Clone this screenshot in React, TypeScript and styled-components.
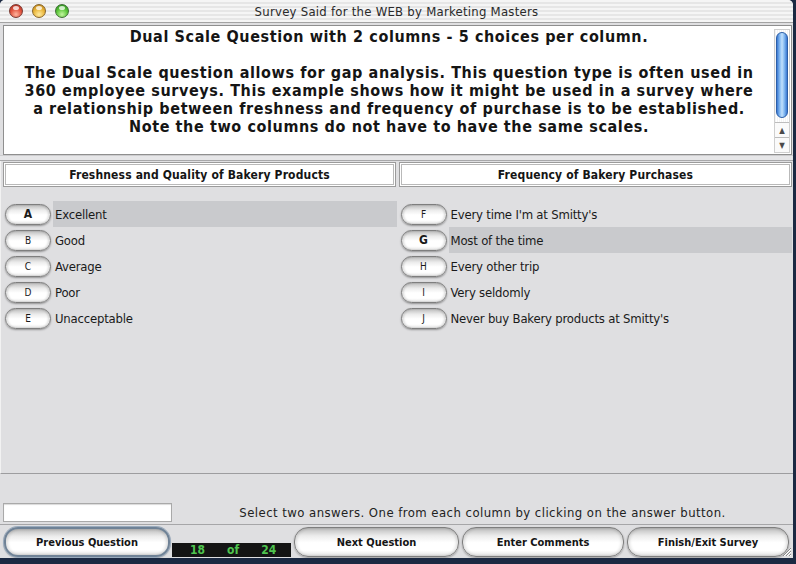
import React from 'react';
import styled, { createGlobalStyle, css } from 'styled-components';

const FONT = `"DejaVu Sans Condensed", "DejaVu Sans", sans-serif`;

const GlobalStyle = createGlobalStyle`
  html, body { margin: 0; padding: 0; }
  body { background: #1b2942; font-family: ${FONT}; }
  * { box-sizing: border-box; }
`;

const Window = styled.div`
  width: 793px;
  height: 558px;
  display: flex;
  flex-direction: column;
  background: #dfdfe1;
  border-radius: 5px 5px 0 0;
  overflow: hidden;
  position: relative;
`;

const TitleBar = styled.div`
  height: 23px;
  flex: none;
  display: grid;
  grid-template-columns: 1fr auto 1fr;
  align-items: center;
  background: repeating-linear-gradient(to bottom, #f5f5f5 0, #f5f5f5 2px, #e6e6e6 2px, #e6e6e6 4px);
  border-bottom: 1px solid #a3a3a3;
`;

const Lights = styled.div`
  display: flex;
  gap: 9px;
  padding-left: 9px;
  padding-bottom: 1px;
`;

const lightColors = {
  red: ['#ffb59e', '#e2543f', '#a8281b', '#7a3a32'],
  yellow: ['#ffeaa0', '#eab73c', '#b57a12', '#86642a'],
  green: ['#c4f5a0', '#5cc63a', '#23851a', '#3f6e34'],
};

const Light = styled.div<{ $c: 'red' | 'yellow' | 'green' }>`
  width: 14px;
  height: 14px;
  border-radius: 50%;
  position: relative;
  ${({ $c }) => css`
    background: radial-gradient(circle at 50% 78%, ${lightColors[$c][0]} 0%, ${lightColors[$c][1]} 50%, ${lightColors[$c][2]} 100%);
    border: 1px solid ${lightColors[$c][3]};
  `}
  &::after {
    content: '';
    position: absolute;
    left: 3px;
    top: 1px;
    width: 6px;
    height: 4px;
    border-radius: 50%;
    background: rgba(255, 255, 255, 0.75);
  }
`;

const Title = styled.div`
  font-size: 13px;
  letter-spacing: 0.25px;
  color: #2a2a2a;
  white-space: nowrap;
`;

const QuestionBox = styled.div`
  margin: 2px 1px 0 3px;
  height: 130px;
  flex: none;
  border: 1px solid #8f8f8f;
  background: #fff;
  display: flex;
`;

const QuestionText = styled.div`
  flex: 1;
  padding-top: 2px;
  text-align: center;
  font-weight: bold;
  font-size: 16px;
  letter-spacing: 0.6px;
  line-height: 18px;
  color: #151515;
  white-space: nowrap;
`;

const Line = styled.div`
  height: 18px;
`;

const ScrollTrack = styled.div`
  width: 16px;
  margin: 3px 1px 1px 0;
  display: flex;
  flex-direction: column;
  border: 1px solid #cfcfcf;
  background: repeating-linear-gradient(to right, #f4f4f4 0, #f4f4f4 1px, #ffffff 1px, #ffffff 2px);
`;

const Thumb = styled.div`
  margin: 2px 1px 0;
  height: 86px;
  border-radius: 7px;
  border: 1px solid #2c5fa8;
  background: linear-gradient(to right, #3a78d2 0%, #86bbf2 28%, #c2e0fc 50%, #86bbf2 72%, #3a78d2 100%);
`;

const TrackSpace = styled.div`
  flex: 1;
`;

const Arrow = styled.div`
  height: 15px;
  border-top: 1px solid #bdbdbd;
  display: flex;
  align-items: center;
  justify-content: center;
  font-size: 8px;
  color: #4a4a4a;
  background: #fafafa;
`;

const Divider = styled.div`
  height: 6px;
  flex: none;
  border-top: 1px solid #cdcdcf;
  border-bottom: 1px solid #a7a7a9;
  background: #e6e6e8;
`;

const ChoicesPanel = styled.div`
  flex: 1;
  display: flex;
  flex-direction: column;
  border-bottom: 1px solid #9d9d9f;
  border-left: 1px solid #f2f2f2;
`;

const HeaderRow = styled.div`
  display: grid;
  grid-template-columns: 1fr 1fr;
  gap: 3px;
  padding: 1px 1px 0 2px;
`;

const HeaderBox = styled.div`
  height: 25px;
  background: #fff;
  border: 1px solid #9b9b9b;
  box-shadow: inset 0 0 0 1px #fff, inset 0 0 0 2px #b9b9b9;
  display: flex;
  align-items: center;
  justify-content: center;
  font-weight: bold;
  font-size: 12px;
  letter-spacing: 0.15px;
  color: #151515;
`;

const Columns = styled.div`
  display: grid;
  grid-template-columns: 1fr 1fr;
  gap: 4px;
  padding: 14px 1px 0 4px;
`;

const Column = styled.div`
  display: flex;
  flex-direction: column;
`;

const Row = styled.div`
  height: 26px;
  display: flex;
  align-items: center;
`;

const aquaFace = css`
  background: linear-gradient(to bottom, #bdbdbd 0%, #ececec 28%, #ffffff 52%, #ffffff 80%, #e6e6e6 100%);
`;

const ChoiceButton = styled.div<{ $selected?: boolean }>`
  width: 46px;
  height: 21px;
  flex: none;
  margin-right: 2px;
  border-radius: 11px;
  border: 1px solid #7e7e7e;
  ${aquaFace}
  box-shadow: 0 1px 2px rgba(0, 0, 0, 0.35), inset 2px 0 2px rgba(0, 0, 0, 0.12), inset -2px 0 2px rgba(0, 0, 0, 0.12);
  display: flex;
  align-items: center;
  justify-content: center;
  color: #1a1a1a;
  font-size: ${({ $selected }) => ($selected ? '12px' : '10px')};
  font-weight: ${({ $selected }) => ($selected ? 'bold' : 'normal')};
`;

const ChoiceLabel = styled.div<{ $selected?: boolean }>`
  flex: 1;
  height: 26px;
  display: flex;
  align-items: center;
  padding-left: 2px;
  font-size: 13px;
  letter-spacing: -0.2px;
  color: #1a1a1a;
  white-space: nowrap;
  background: ${({ $selected }) => ($selected ? '#c9cacd' : 'transparent')};
`;

const StatusArea = styled.div`
  height: 50px;
  flex: none;
  display: flex;
  align-items: flex-end;
  padding: 0 0 2px 3px;
`;

const Input = styled.div`
  width: 169px;
  height: 19px;
  background: #fff;
  border: 1px solid #a9a9a9;
  box-shadow: inset 0 1px 1px rgba(0, 0, 0, 0.15);
`;

const StatusText = styled.div`
  flex: 1;
  text-align: center;
  font-size: 13px;
  letter-spacing: 0.45px;
  line-height: 19px;
  color: #222;
  white-space: nowrap;
`;

const ButtonBar = styled.div`
  height: 34px;
  flex: none;
  border-top: 1px solid #a6a6a8;
  display: flex;
  align-items: flex-start;
  gap: 3px;
  padding: 2px 0 0 4px;
`;

const PushButton = styled.div<{ $w: number; $focused?: boolean }>`
  width: ${({ $w }) => $w}px;
  height: 30px;
  flex: none;
  border-radius: 14px;
  border: ${({ $focused }) => ($focused ? '2px solid #6f8296' : '1px solid #7e7e7e')};
  ${aquaFace}
  box-shadow: ${({ $focused }) =>
    $focused
      ? '0 0 0 1px #9aabbd, 0 1px 2px rgba(0,0,0,0.3), inset 2px 0 3px rgba(0,0,0,0.12), inset -2px 0 3px rgba(0,0,0,0.12)'
      : '0 1px 2px rgba(0, 0, 0, 0.3), inset 2px 0 3px rgba(0,0,0,0.12), inset -2px 0 3px rgba(0,0,0,0.12)'};
  display: flex;
  align-items: center;
  justify-content: center;
  font-weight: bold;
  font-size: 11px;
  color: #151515;
  white-space: nowrap;
`;

const Counter = styled.div`
  width: 119px;
  height: 14px;
  margin-top: 16px;
  margin-left: -1px;
  flex: none;
  background: #141414;
  display: flex;
  align-items: center;
  gap: 22px;
  padding-left: 18px;
  color: #4fc44f;
  font-weight: bold;
  font-size: 12px;
  line-height: 14px;
`;

const Grip = styled.svg`
  position: absolute;
  right: 1px;
  bottom: 1px;
  width: 12px;
  height: 12px;
`;

const left = [
  { key: 'A', text: 'Excellent', selected: true },
  { key: 'B', text: 'Good' },
  { key: 'C', text: 'Average' },
  { key: 'D', text: 'Poor' },
  { key: 'E', text: 'Unacceptable' },
];

const right = [
  { key: 'F', text: "Every time I'm at Smitty's" },
  { key: 'G', text: 'Most of the time', selected: true },
  { key: 'H', text: 'Every other trip' },
  { key: 'I', text: 'Very seldomly' },
  { key: 'J', text: "Never buy Bakery products at Smitty's" },
];

type Choice = { key: string; text: string; selected?: boolean };

const ChoiceColumn = ({ items }: { items: Choice[] }) => (
  <Column>
    {items.map((c) => (
      <Row key={c.key}>
        <ChoiceButton $selected={c.selected}>{c.key}</ChoiceButton>
        <ChoiceLabel $selected={c.selected}>{c.text}</ChoiceLabel>
      </Row>
    ))}
  </Column>
);

export default function App() {
  return (
    <>
      <GlobalStyle />
      <Window>
        <TitleBar>
          <Lights>
            <Light $c="red" />
            <Light $c="yellow" />
            <Light $c="green" />
          </Lights>
          <Title>Survey Said for the WEB by Marketing Masters</Title>
          <div />
        </TitleBar>
        <QuestionBox>
          <QuestionText>
            <Line>Dual Scale Question with 2 columns - 5 choices per column.</Line>
            <Line />
            <Line>The Dual Scale question allows for gap analysis. This question type is often used in</Line>
            <Line>360 employee surveys. This example shows how it might be used in a survey where</Line>
            <Line>a relationship between freshness and frequency of purchase is to be established.</Line>
            <Line>Note the two columns do not have to have the same scales.</Line>
          </QuestionText>
          <ScrollTrack>
            <Thumb />
            <TrackSpace />
            <Arrow>▲</Arrow>
            <Arrow>▼</Arrow>
          </ScrollTrack>
        </QuestionBox>
        <Divider />
        <ChoicesPanel>
          <HeaderRow>
            <HeaderBox>Freshness and Quality of Bakery Products</HeaderBox>
            <HeaderBox>Frequency of Bakery Purchases</HeaderBox>
          </HeaderRow>
          <Columns>
            <ChoiceColumn items={left} />
            <ChoiceColumn items={right} />
          </Columns>
        </ChoicesPanel>
        <StatusArea>
          <Input />
          <StatusText>Select two answers. One from each column by clicking on the answer button.</StatusText>
        </StatusArea>
        <ButtonBar>
          <PushButton $w={166} $focused>Previous Question</PushButton>
          <Counter>
            <span>18</span>
            <span>of</span>
            <span>24</span>
          </Counter>
          <PushButton $w={165}>Next Question</PushButton>
          <PushButton $w={162}>Enter Comments</PushButton>
          <PushButton $w={162}>Finish/Exit Survey</PushButton>
        </ButtonBar>
        <Grip viewBox="0 0 12 12">
          <path d="M11 3 L3 11 M11 6 L6 11 M11 9 L9 11" stroke="#8a8a8a" strokeWidth="1" />
          <path d="M11 4 L4 11 M11 7 L7 11 M11 10 L10 11" stroke="#ffffff" strokeWidth="1" />
        </Grip>
      </Window>
    </>
  );
}
